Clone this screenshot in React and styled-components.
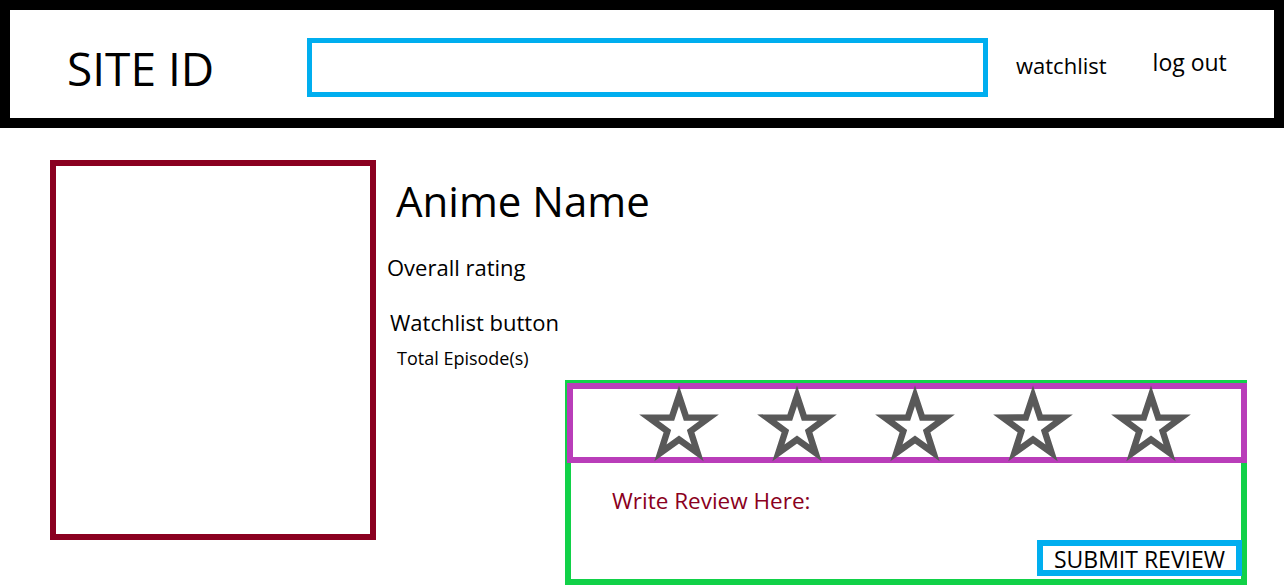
import React from 'react';
import styled, { createGlobalStyle } from 'styled-components';

const GlobalStyle = createGlobalStyle`
    html, body {
        margin: 0;
        padding: 0;
        background: #fff;
    }
    body {
        font-family: "Segoe UI", "Open Sans", "Noto Sans", sans-serif;
        color: #000;
    }
    * {
        box-sizing: border-box;
    }
`;

const Star = () => (
    <StarIcon viewBox="0 0 100 96">
        <polygon
            points="50,8 60,38.3 91.8,38.4 66.2,57.3 75.9,87.6 50,69 24.1,87.6 33.8,57.3 8.2,38.4 40,38.3"
            fill="none"
            stroke="#595959"
            strokeWidth="9"
            strokeLinejoin="miter"
        />
    </StarIcon>
);

const App = () => {
    return (
        <>
            <GlobalStyle />
            <Header>
                <SiteId>SITE ID</SiteId>
                <SearchBox />
                <NavLink $top={43.5} $left={28} $size={22}>watchlist</NavLink>
                <NavLink $top={41} $left={46} $size={23}>log out</NavLink>
            </Header>
            <Main>
                <Poster />
                <Details>
                    <Title>Anime Name</Title>
                    <InfoLine $top={33.5} $left={0}>Overall rating</InfoLine>
                    <InfoLine $top={33} $left={3}>Watchlist button</InfoLine>
                    <SmallLine>Total Episode(s)</SmallLine>
                    <ReviewPanel>
                        <StarsBar>
                            {[0, 1, 2, 3, 4].map((i) => (
                                <Star key={i} />
                            ))}
                        </StarsBar>
                        <ReviewBody>
                            <ReviewLabel>Write Review Here:</ReviewLabel>
                            <SubmitButton>SUBMIT REVIEW</SubmitButton>
                        </ReviewBody>
                    </ReviewPanel>
                </Details>
            </Main>
        </>
    );
};

export default App;

const Header = styled.header`
    height: 128px;
    border: 10px solid #000;
    display: flex;
    align-items: flex-start;
`;

const SiteId = styled.div`
    flex: 0 0 297px;
    padding-left: 57px;
    margin-top: 35px;
    font-size: 46px;
    line-height: 1;
`;

const SearchBox = styled.div`
    margin-top: 28px;
    width: 681px;
    height: 59px;
    border: 5px solid #00aeef;
`;

const NavLink = styled.div`
    margin-top: ${(p) => p.$top}px;
    margin-left: ${(p) => p.$left}px;
    font-size: ${(p) => p.$size}px;
    line-height: 1;
`;

const Main = styled.main`
    display: flex;
    align-items: flex-start;
    padding: 32px 0 0 50px;
`;

const Poster = styled.div`
    flex: 0 0 326px;
    height: 380px;
    border: 6px solid #8a0020;
`;

const Details = styled.section`
    display: flex;
    flex-direction: column;
    align-items: flex-start;
    padding-left: 11px;
`;

const Title = styled.h1`
    margin: 20px 0 0 9px;
    font-size: 42px;
    font-weight: 400;
    line-height: 1;
`;

const InfoLine = styled.div`
    margin: ${(p) => p.$top}px 0 0 ${(p) => p.$left}px;
    font-size: 22px;
    line-height: 1;
`;

const SmallLine = styled.div`
    margin: 16px 0 0 10px;
    font-size: 18px;
    line-height: 1;
`;

const ReviewPanel = styled.div`
    margin: 13px 0 0 178px;
    width: 682px;
    height: 205px;
    border: 6px solid #11d148;
    display: flex;
    flex-direction: column;
`;

const StarsBar = styled.div`
    margin: -3px -6px 0 -4px;
    height: 80px;
    border: 6px solid #b93db9;
    display: flex;
    align-items: center;
    justify-content: center;
    gap: 46px;
    padding: 3px 0 0 16px;
`;

const StarIcon = styled.svg`
    width: 72px;
    height: 69px;
    overflow: visible;
`;

const ReviewBody = styled.div`
    flex: 1;
    display: flex;
    flex-direction: column;
    padding: 27px 0 3px 41px;
`;

const ReviewLabel = styled.div`
    font-size: 22.5px;
    line-height: 1;
    color: #8a0020;
`;

const SubmitButton = styled.button`
    margin-top: auto;
    margin-right: -1px;
    align-self: flex-end;
    width: 205px;
    height: 36px;
    padding: 2px 0 0;
    border: 6px solid #00aeef;
    background: #fff;
    font-family: inherit;
    font-size: 23px;
    line-height: 1;
    color: #000;
    cursor: pointer;
`;
